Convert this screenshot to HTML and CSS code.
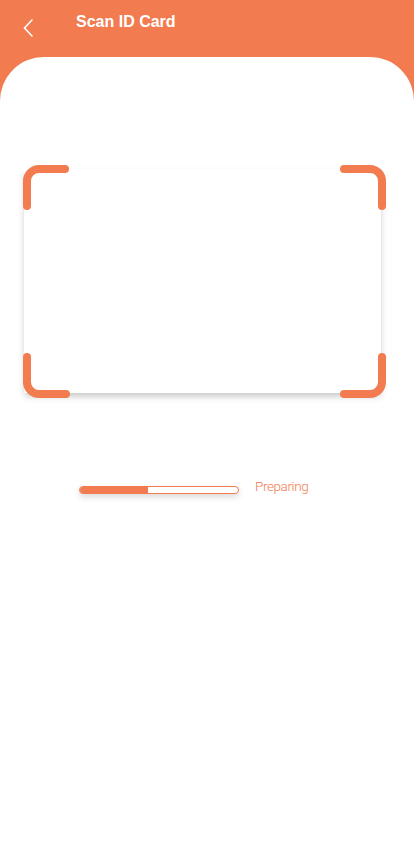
FILE: index.html
```html
<!DOCTYPE html>
<html lang="en">
<head>
<meta charset="utf-8">
<title>Scan ID Card</title>
<link rel="stylesheet" href="styles.css">
</head>
<body>
<div class="screen">
  <header class="header">
    <button class="back" aria-label="Back">
      <svg width="14" height="20" viewBox="0 0 14 20"><path d="M11 2 L3.5 10 L11 18" fill="none" stroke="#fff" stroke-width="1.6" stroke-linecap="round" stroke-linejoin="miter"/></svg>
    </button>
    <h1 class="title">Scan ID Card</h1>
  </header>
  <main class="panel">
    <div class="scanner">
      <div class="card"></div>
      <svg class="brackets" width="363" height="233" viewBox="0 0 363 233">
        <g fill="none" stroke="#F27B50" stroke-width="8" stroke-linecap="round">
          <path d="M4 41 V16 A12 12 0 0 1 16 4 H42"/>
          <path d="M321 4 H347 A12 12 0 0 1 359 16 V41"/>
          <path d="M4 192 V217 A12 12 0 0 0 16 229 H43"/>
          <path d="M321 229 H347 A12 12 0 0 0 359 217 V192"/>
        </g>
      </svg>
    </div>
    <div class="progress-row">
      <div class="bar"><div class="fill" style="width:68px"></div></div>
      <span class="status">Preparing</span>
    </div>
  </main>
</div>
</body>
</html>
```
FILE: styles.css
```css
html, body {
  margin: 0;
  padding: 0;
}
body {
  background: #F27B50;
  font-family: "Liberation Sans", Arial, sans-serif;
}
.screen {
  width: 414px;
  min-height: 847px;
  display: flex;
  flex-direction: column;
}
.header {
  height: 57px;
  display: flex;
  align-items: flex-start;
  flex-shrink: 0;
}
.back {
  margin: 18px 0 0 21px;
  padding: 0;
  border: 0;
  background: none;
  width: 14px;
  height: 20px;
  display: block;
}
.back svg {
  display: block;
}
.title {
  margin: 11.5px 0 0 41px;
  font-size: 16px;
  line-height: 20px;
  font-weight: 700;
  color: #fff;
}
.panel {
  flex: 1;
  background: #fff;
  border-radius: 44px 44px 0 0;
  padding-top: 108px;
  min-height: 682px;
}
.scanner {
  position: relative;
  margin-left: 23px;
  width: 363px;
  height: 233px;
  box-sizing: border-box;
  padding: 4px 5px 5px 1px;
}
.card {
  width: 357px;
  height: 224px;
  background: #fff;
  box-shadow: 0 4px 7px -1px rgba(0, 0, 0, 0.24);
}
.brackets {
  position: absolute;
  left: 0;
  top: 0;
}
.progress-row {
  display: flex;
  align-items: flex-start;
  margin: 80px 0 0 79px;
  gap: 16px;
}
.bar {
  margin-top: 8px;
  width: 160px;
  height: 8px;
  box-sizing: border-box;
  border: 1px solid #F27B50;
  border-radius: 4px;
  background: #fff;
  overflow: hidden;
  box-shadow: 0 3px 6px rgba(0, 0, 0, 0.15);
}
.fill {
  height: 100%;
  background: #F27B50;
}
.status {
  font-family: Roboto, "Noto Sans", sans-serif;
  font-weight: 300;
  font-size: 13.5px;
  line-height: 16px;
  letter-spacing: -0.4px;
  color: #F27B50;
}
```
